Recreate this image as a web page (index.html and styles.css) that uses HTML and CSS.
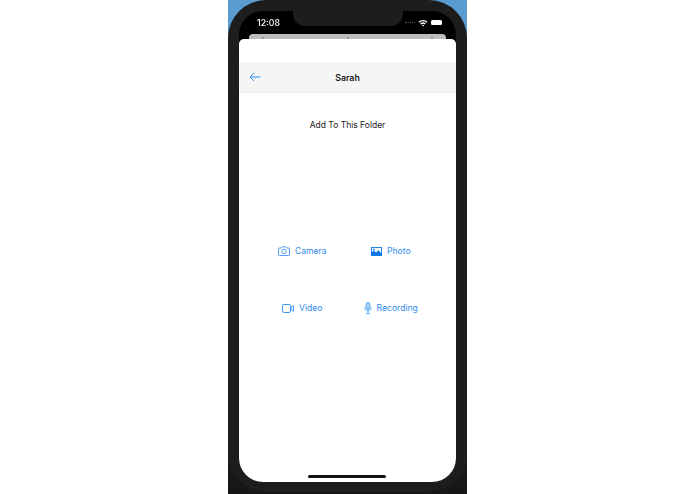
FILE: index.html
```html
<!DOCTYPE html>
<html lang="en">
<head>
<meta charset="utf-8">
<title>Sarah</title>
<link rel="stylesheet" href="styles.css">
</head>
<body>
<div class="backdrop">
  <div class="device">
    <div class="screen">
      <div class="notch"></div>
      <div class="status">
        <span class="time">12:08</span>
        <span class="indicators">
          <span class="dots"></span>
          <svg class="wifi" width="10" height="8" viewBox="0 0 10 8"><path d="M0.5 2.8a6.4 6.4 0 0 1 9 0l-1 1a5 5 0 0 0-7 0zM2.2 4.5a4 4 0 0 1 5.6 0l-1 1a2.6 2.6 0 0 0-3.6 0zM3.9 6.2a1.6 1.6 0 0 1 2.2 0L5 7.4z" fill="#fff"/></svg>
          <span class="battery"></span>
        </span>
      </div>
      <div class="backsheet">
        <span class="peek"></span>
        <span class="peek"></span>
        <span class="peek"></span>
      </div>
      <div class="sheet">
        <div class="sheet-top"></div>
        <header class="navbar">
          <svg class="back" width="12" height="10" viewBox="0 0 12 10"><path d="M11.5 5H1M5 1 1 5l4 4" fill="none" stroke="#2f8cf0" stroke-width="1"/></svg>
          <span class="nav-title">Sarah</span>
        </header>
        <p class="heading">Add To This Folder</p>
        <div class="actions">
          <a class="action">
            <svg width="12" height="10" viewBox="0 0 12 10"><path d="M1.5 2H3.6L4.5.7h3L8.4 2h2.1a1 1 0 0 1 1 1v5.8a.7.7 0 0 1-.7.7H1.2a.7.7 0 0 1-.7-.7V3a1 1 0 0 1 1-1z" fill="none" stroke="#3f95f2" stroke-width=".9"/><circle cx="6" cy="5.4" r="2.2" fill="none" stroke="#3f95f2" stroke-width=".9"/></svg>
            <span>Camera</span>
          </a>
          <a class="action">
            <svg width="11" height="9" viewBox="0 0 12 10"><rect x=".5" y=".5" width="11" height="9" fill="#fff" stroke="#0b78e8"/><path d="M0 10V6.5l3-2.5 2.5 2L8 3.5l4 4V10z" fill="#0b78e8"/><circle cx="3" cy="2.8" r="1" fill="#0b78e8"/></svg>
            <span>Photo</span>
          </a>
          <a class="action">
            <svg width="12" height="9" viewBox="0 0 12 9"><rect x=".5" y=".5" width="8" height="8" rx="1.4" fill="none" stroke="#3f95f2"/><path d="M9 3.6 11.5 1.6v5.8L9 5.4z" fill="none" stroke="#3f95f2" stroke-width=".9"/></svg>
            <span>Video</span>
          </a>
          <a class="action">
            <svg width="8" height="12" viewBox="0 0 8 12"><rect x="2.2" y=".5" width="3.6" height="7" rx="1.8" fill="#a9d0f8" stroke="#3f95f2" stroke-width=".8"/><path d="M.6 5.2C.6 7.6 2 8.8 4 8.8s3.4-1.2 3.4-3.6M4 8.8v2.4M2 11.5h4" fill="none" stroke="#3f95f2" stroke-width=".8"/></svg>
            <span>Recording</span>
          </a>
        </div>
        <div class="home-bar"></div>
      </div>
    </div>
  </div>
</div>
</body>
</html>
```
FILE: styles.css
```css
html, body {
  margin: 0;
  padding: 0;
  height: 100%;
  background: #fff;
  overflow: hidden;
}
body {
  display: flex;
  justify-content: center;
  font-family: "Inter", "Liberation Sans", sans-serif;
}
.backdrop {
  width: 239px;
  height: 494px;
  background: linear-gradient(to bottom, #5a9bd0 0, #5a9bd0 60px, #3d6f96 90px, #2c2c2c 130px, #161616 100%);
}
.device {
  height: 492px;
  padding: 11px 11px 10px;
  box-sizing: border-box;
  background: #1d1d1d;
  border-radius: 38px;
  filter: blur(0.35px);
}
.screen {
  position: relative;
  height: 100%;
  background: #000;
  border-radius: 24px;
  display: flex;
  flex-direction: column;
  overflow: hidden;
}
.notch {
  position: absolute;
  top: 0;
  left: 54px;
  width: 110px;
  height: 15px;
  background: #1d1d1d;
  border-radius: 0 0 12px 12px;
}
.status {
  height: 23px;
  flex: none;
  display: flex;
  justify-content: space-between;
  align-items: center;
  padding: 0 14px 0 18px;
}
.time {
  color: #fff;
  font-size: 8.8px;
  font-weight: 500;
}
.indicators {
  display: flex;
  align-items: center;
  gap: 3px;
}
.dots {
  width: 10px;
  border-top: 1px dotted #555;
}
.battery {
  width: 11px;
  height: 5px;
  background: #fff;
  border-radius: 1.5px;
}
.backsheet {
  flex: none;
  height: 5px;
  margin: 0 10px;
  padding: 0 13px 0 13px;
  display: flex;
  justify-content: space-between;
  align-items: flex-end;
  background: #bdbdbd;
  border-radius: 4px 4px 0 0;
}
.peek {
  width: 2px;
  height: 2px;
  background: #8a9bb0;
}
.sheet {
  flex: 1;
  position: relative;
  background: #fff;
  border-radius: 5px 5px 0 0;
  display: flex;
  flex-direction: column;
  min-height: 0;
}
.sheet-top {
  height: 23px;
  flex: none;
}
.navbar {
  position: relative;
  height: 30px;
  flex: none;
  display: flex;
  align-items: center;
  justify-content: center;
  background: #f5f5f5;
  border-bottom: 1px solid #ececec;
}
.back {
  position: absolute;
  left: 10px;
  top: 10px;
}
.nav-title {
  font-size: 8.8px;
  font-weight: 600;
  color: #1a1a1a;
}
.heading {
  margin: 26px 0 0;
  text-align: center;
  font-size: 8.5px;
  color: #1a1a1a;
  line-height: 12px;
}
.actions {
  margin: 114px 0 0;
  padding: 0 21px 0 19px;
  display: grid;
  grid-template-columns: 1fr 1fr;
  row-gap: 45px;
}
.action {
  height: 12px;
  display: flex;
  align-items: center;
  justify-content: center;
  gap: 5px;
  font-size: 8.6px;
  color: #2f8cf0;
}
.home-bar {
  position: absolute;
  left: 69px;
  bottom: 4px;
  width: 78px;
  height: 3px;
  border-radius: 2px;
  background: #111;
}
```
